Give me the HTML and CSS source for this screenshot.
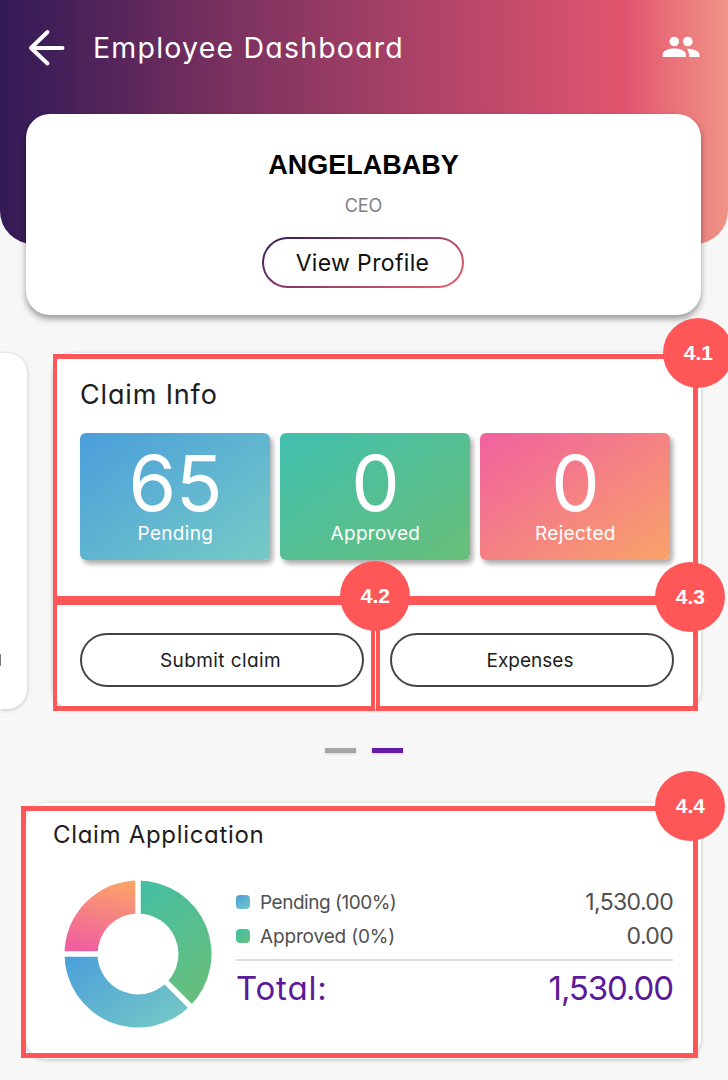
FILE: index.html
```html
<!DOCTYPE html>
<html lang="en">
<head>
<meta charset="utf-8">
<title>Employee Dashboard</title>
<link rel="stylesheet" href="styles.css">
</head>
<body>
<main class="page">
  <header class="hero">
    <div class="appbar">
      <svg class="back" width="40" height="40" viewBox="0 0 40 40"><path d="M20.500 4 4 20 20.500 35.500M4 20H35.500" /></svg>
      <h1 class="title">Employee Dashboard</h1>
      <svg class="people" width="38" height="24" viewBox="0 0 38 24"><circle cx="12.300" cy="5.500" r="4.800"/><circle cx="25.800" cy="5.500" r="4.800"/><path d="M.7 21v-2.500C.7 14.500 7.500 12.600 12.300 12.600S23.900 14.500 23.900 18.500V21ZM24.500 12.700C30 12.700 37.500 14.700 37.500 18.500V21H27v-2.500C27 16 26 14 24.500 12.700Z"/></svg>
    </div>
    <section class="profile">
      <div class="name">ANGELABABY</div>
      <div class="role">CEO</div>
      <a class="view">View Profile</a>
    </section>
  </header>

  <div class="carousel">
    <section class="card previous"><i class="previous-button"></i></section>
    <section class="card info">
      <h2 class="info-title">Claim Info</h2>
      <div class="tiles">
        <div class="tile pending"><b>65</b><small>Pending</small></div>
        <div class="tile approved"><b>0</b><small>Approved</small></div>
        <div class="tile rejected"><b>0</b><small>Rejected</small></div>
      </div>
      <div class="actions">
        <a class="action">Submit claim</a>
        <a class="action">Expenses</a>
      </div>
    </section>
  </div>

  <div class="pager"><i></i><i class="current"></i></div>

  <section class="card application">
    <h2 class="app-title">Claim Application</h2>
    <div class="summary">
      <svg class="donut" width="148" height="148" viewBox="-74 -74 148 148">
        <defs>
          <linearGradient id="green" x1="0" y1="0" x2=".6" y2="1"><stop stop-color="#43bea5"/><stop offset="1" stop-color="#66be7e"/></linearGradient>
          <linearGradient id="blue" x1="0" y1="0" x2="1" y2=".8"><stop stop-color="#4a9edb"/><stop offset="1" stop-color="#74c7c6"/></linearGradient>
          <linearGradient id="pink" x1=".8" y1="0" x2=".5" y2="1"><stop stop-color="#fba467"/><stop offset="1" stop-color="#f0609f"/></linearGradient>
        </defs>
        <path fill="url(#green)" d="M0-73.500A73.500 73.500 0 0 1 52 52L28.600 28.600A40.500 40.500 0 0 0 0-40.500Z"/>
        <path fill="url(#blue)" d="M52 52A73.500 73.500 0 0 1-73.500 0H-40.500A40.500 40.500 0 0 0 28.600 28.600Z"/>
        <path fill="url(#pink)" d="M-73.500 0A73.500 73.500 0 0 1 0-73.500V-40.500A40.500 40.500 0 0 0-40.500 0Z"/>
        <path stroke="#fff" stroke-width="5.500" d="M0 0V-74M0 0H-74M0 0 54 54"/>
      </svg>
      <div class="figures">
        <div class="row"><i class="swatch pending"></i><span class="label">Pending (100%)</span><span class="amount">1,530.00</span></div>
        <div class="row"><i class="swatch approved"></i><span class="label wide">Approved (0%)</span><span class="amount">0.00</span></div>
        <div class="total"><span class="total-label">Total:</span><span class="total-amount">1,530.00</span></div>
      </div>
    </div>
  </section>

  <div class="frame f1"></div>
  <div class="frame f2"></div>
  <div class="frame f3"></div>
  <div class="frame f4"></div>
  <div class="badge b1">4.1</div>
  <div class="badge b2">4.2</div>
  <div class="badge b3">4.3</div>
  <div class="badge b4">4.4</div>
</main>
</body>
</html>
```
FILE: styles.css
```css
* { box-sizing: border-box; }
body { margin: 0; background: #f7f7f7; font-family: Inter, "Liberation Sans", sans-serif; font-feature-settings: "cv11"; font-weight: 400; color: #1d1d1d; }
h1, h2, b, small { margin: 0; font-weight: 400; }
b, small, i { display: block; }
span { white-space: nowrap; }
.page { position: relative; width: 728px; height: 1080px; overflow: hidden; }

.hero { height: 244px; padding: 0 27px 0 26px; border-radius: 0 0 33px 33px; background: linear-gradient(90deg, #341b56 0%, #3d1d58 5%, #7a315f 31%, #e2556f 86%, #f09486 100%); }
.appbar { display: flex; align-items: center; height: 95px; padding-left: 1px; color: #fff; }
.back { fill: none; stroke: #fff; stroke-width: 4; stroke-linecap: round; stroke-linejoin: round; }
.title { margin-left: 26px; font-size: 28.500px; line-height: 40px; letter-spacing: 1.200px; white-space: nowrap; }
.people { margin-left: auto; margin-right: 1px; fill: #fff; }

.profile { display: flex; flex-direction: column; align-items: center; height: 201.500px; margin: 18.500px 0 0; padding-top: 36.500px; background: #fff; border-radius: 24px; box-shadow: 0 4px 6px rgba(0,0,0,.38); }
.name { font: bold 27px/30px "Liberation Sans", Arial, sans-serif; color: #000; }
.role { margin-top: 13px; font-size: 18px; line-height: 26px; letter-spacing: -.100px; color: #808080; }
.view { display: flex; align-items: center; justify-content: center; width: 202px; height: 51px; margin: 18px 2px 0 0; border: 2px solid transparent; border-radius: 26px; background: linear-gradient(#fff, #fff) padding-box, linear-gradient(155deg, #341b56, #94406a 50%, #f0606f) border-box; font-size: 23px; letter-spacing: .350px; color: #111; }

.card { background: #fff; border-radius: 20px; box-shadow: 0 1px 4px rgba(0,0,0,.22); }
.carousel { display: flex; gap: 26px; margin-top: 109px; }
.previous { flex: none; width: 27px; height: 356px; border-radius: 0 20px 20px 0; }
.previous-button { width: 1px; height: 12px; margin-top: 301px; background: #777; }
.info { width: 648px; height: 356px; padding: 27px 27px 0; }
.info-title { font-size: 27px; line-height: 30px; letter-spacing: .850px; }
.tiles { display: grid; grid-template-columns: repeat(3, 190px); gap: 10px; margin: 23px 0 0 .400px; }
.tile { height: 127px; border-radius: 6px; color: #fff; text-align: center; box-shadow: 3px 4px 5px rgba(0,0,0,.32); }
.tile b { height: 87px; padding-top: 12px; font-size: 77px; line-height: 76px; letter-spacing: -.500px; }
.tile small { font-size: 19px; line-height: 28px; letter-spacing: .300px; }
.pending { background: linear-gradient(145deg, #4a9edb, #76cbc6); }
.approved { background: linear-gradient(145deg, #40bfaf, #69bf79); }
.rejected { background: linear-gradient(145deg, #f0609f, #f9a369); }
.actions { display: grid; grid-template-columns: 284px 284px; gap: 26px; margin-top: 73px; }
.action { display: flex; align-items: center; justify-content: center; height: 54px; border: 2px solid #444; border-radius: 27px; padding-right: 3px; font-size: 19px; letter-spacing: .400px; }
.action + .action { padding-right: 4px; letter-spacing: 0; }

.pager { display: flex; justify-content: center; gap: 16px; margin-top: 39px; }
.pager i { width: 31px; height: 5px; background: #a5a5a5; box-shadow: 0 1px 3px rgba(0,0,0,.15); }
.pager .current { background: #651ba3; }

.application { width: 675px; height: 256px; margin: 50px 0 0 26px; padding: 17px 28px 0 27px; }
.app-title { font-size: 24px; line-height: 30px; letter-spacing: .680px; }
.summary { display: flex; margin-top: 30px; padding-left: 11px; }
.figures { flex: 1; margin-left: 24px; padding-top: 5px; }
.row { display: flex; align-items: center; height: 34px; color: #505050; }
.swatch { width: 14px; height: 14px; border-radius: 4px; margin-right: 10px; }
.label { font-size: 19px; letter-spacing: -.480px; }
.label.wide { letter-spacing: -.150px; }
.amount { margin-left: auto; font-size: 23px; letter-spacing: -.650px; }
.total { display: flex; justify-content: space-between; margin-top: 6px; border-top: 2px solid #ddd; font-size: 33px; line-height: 54px; color: #5a1a99; }
.total-label { letter-spacing: .800px; }
.total-amount { letter-spacing: -1.100px; }

.frame { position: absolute; border: solid #ff5757; border-width: 5px 5px 5px 4px; }
.f1 { left: 53px; top: 354px; width: 645px; height: 247px; }
.f2 { left: 53px; top: 601px; width: 322px; height: 110px; border-top-width: 4px; border-right-width: 4px; }
.f3 { left: 376px; top: 601px; width: 322px; height: 110px; border-top-width: 4px; }
.f4 { left: 21px; top: 806px; width: 677px; height: 252px; border-left-width: 5px; }
.badge { position: absolute; width: 70px; height: 70px; border-radius: 50%; background: #ff5757; color: #fff; text-align: center; font: bold 21px/70px "Liberation Sans", Arial, sans-serif; }
.b1 { left: 663.400px; top: 318px; }
.b2 { left: 340.400px; top: 561px; }
.b3 { left: 655.400px; top: 562px; }
.b4 { left: 655.400px; top: 770.500px; }
```
